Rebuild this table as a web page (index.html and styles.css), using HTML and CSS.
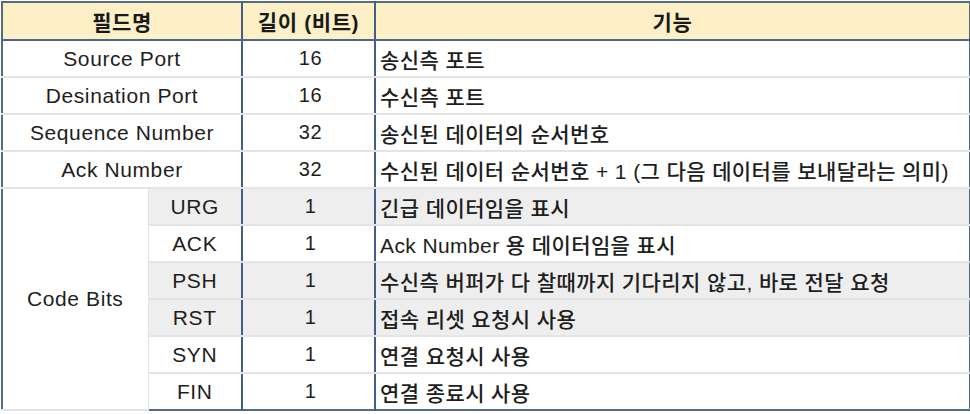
FILE: index.html
```html
<!DOCTYPE html>
<html lang="ko">
<head>
<meta charset="utf-8">
<title>TCP 헤더 필드</title>
<link rel="stylesheet" href="styles.css">
</head>
<body>
<div class="wrap">
<table class="tcp">
  <colgroup>
    <col class="w-name">
    <col class="w-sub">
    <col class="w-len">
    <col class="w-func">
  </colgroup>
  <thead>
    <tr>
      <th colspan="2">필드명</th>
      <th class="c-len">길이 (비트)</th>
      <th>기능</th>
    </tr>
  </thead>
  <tbody>
    <tr><td colspan="2" class="c-name">Source Port</td><td class="c-len">16</td><td class="c-func">송신측 포트</td></tr>
    <tr><td colspan="2" class="c-name">Desination Port</td><td class="c-len">16</td><td class="c-func">수신측 포트</td></tr>
    <tr><td colspan="2" class="c-name">Sequence Number</td><td class="c-len">32</td><td class="c-func">송신된 데이터의 순서번호</td></tr>
    <tr><td colspan="2" class="c-name">Ack Number</td><td class="c-len">32</td><td class="c-func">수신된 데이터 순서번호 + 1 (그 다음 데이터를 보내달라는 의미)</td></tr>
    <tr class="shade"><td rowspan="6" class="c-name c-group">Code Bits</td><td class="c-sub">URG</td><td class="c-len">1</td><td class="c-func">긴급 데이터임을 표시</td></tr>
    <tr><td class="c-sub">ACK</td><td class="c-len">1</td><td class="c-func">Ack Number 용 데이터임을 표시</td></tr>
    <tr class="shade"><td class="c-sub">PSH</td><td class="c-len">1</td><td class="c-func">수신측 버퍼가 다 찰때까지 기다리지 않고, 바로 전달 요청</td></tr>
    <tr class="shade"><td class="c-sub">RST</td><td class="c-len">1</td><td class="c-func">접속 리셋 요청시 사용</td></tr>
    <tr><td class="c-sub">SYN</td><td class="c-len">1</td><td class="c-func">연결 요청시 사용</td></tr>
    <tr><td class="c-sub">FIN</td><td class="c-len">1</td><td class="c-func">연결 종료시 사용</td></tr>
  </tbody>
</table>
</div>
</body>
</html>
```

FILE: styles.css
```css
html, body {
  margin: 0;
  padding: 0;
  background: #ffffff;
}

.wrap {
  padding: 1px 0 0 1px;
}

.tcp {
  width: 968px;
  table-layout: fixed;
  border-collapse: collapse;
  border: 2px solid #536b85;
  font-family: "Liberation Sans", "Noto Sans CJK KR", Arial, sans-serif;
  font-size: 21px;
  letter-spacing: 0.6px;
  color: #1e1e1e;
}

.w-name { width: 146px; }
.w-sub { width: 94px; }
.w-len { width: 133px; }
.w-func { width: 595px; }

.tcp th {
  height: 36px;
  padding: 0;
  background: #fdf0c7;
  font-family: "Liberation Sans", "Noto Sans CJK KR", sans-serif;
  font-size: 21px;
  font-weight: 700;
  letter-spacing: 0.6px;
  text-align: center;
  border-bottom: 2px solid #4d6784;
  color: #1a1a1a;
}

.tcp td {
  height: 35px;
  padding: 0;
  text-align: center;
  border-bottom: 2px solid #e4e4e4;
  white-space: nowrap;
}

.tcp td.c-len {
  border-left: 2px solid #3f5f88;
  border-right: 2px solid #3f5f88;
  font-size: 20px;
  padding-left: 4px;
}

.tcp th.c-len {
  border-left: 2px solid #3f5f88;
  border-right: 2px solid #3f5f88;
}

.tcp td.c-func {
  text-align: left;
  padding-left: 4px;
  font-size: 21px;
  font-weight: 500;
  letter-spacing: 0.4px;
}

.tcp td.c-group {
  background: #ffffff;
  border-right: 1px solid #e4e4e4;
}

.tcp tr.shade td {
  background: #eeeeee;
}

.tcp tr.shade td.c-group {
  background: #ffffff;
}

.tcp tbody tr:last-child td {
  border-bottom: none;
}
```
